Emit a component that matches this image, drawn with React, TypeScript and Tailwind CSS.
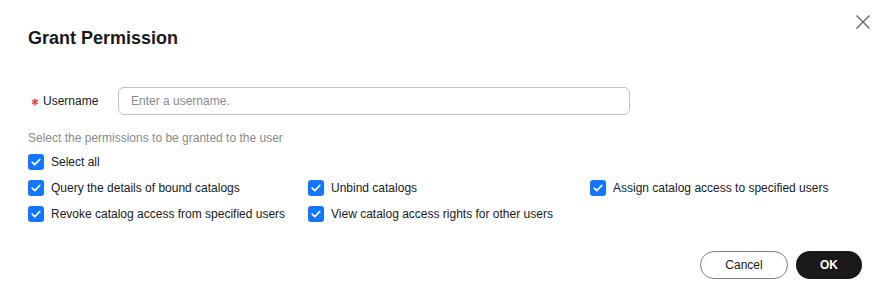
import React from "react";

const perms = [
  "Query the details of bound catalogs",
  "Unbind catalogs",
  "Assign catalog access to specified users",
  "Revoke catalog access from specified users",
  "View catalog access rights for other users",
];

function CheckBox({ label }: { label: string }) {
  return (
    <label className="flex items-center gap-[7px] h-[26px]">
      <span className="w-4 h-4 rounded-[3px] bg-[#1476ff] flex items-center justify-center">
        <svg width="10" height="8" viewBox="0 0 10 8" fill="none">
          <path d="M1.2 4.1L3.8 6.6L8.8 1.4" stroke="white" strokeWidth="1.6" strokeLinecap="round" strokeLinejoin="round" />
        </svg>
      </span>
      <span className="text-[12px] text-[#191919]">{label}</span>
    </label>
  );
}

export default function App() {
  return (
    <div className="w-[888px] h-[306px] bg-white relative font-['Liberation_Sans',Arial,sans-serif] pl-[28px] pr-[26px] pt-[27px]">
      <button className="absolute right-[17px] top-[14px] text-[#666]">
        <svg width="16" height="16" viewBox="0 0 16 16" fill="none">
          <path d="M1.5 1.5L14.5 14.5M14.5 1.5L1.5 14.5" stroke="currentColor" strokeWidth="1.4" />
        </svg>
      </button>
      <h1 className="text-[18px] leading-[22px] font-bold text-[#191919]">Grant Permission</h1>

      <div className="flex items-center mt-[38px]">
        <div className="w-[90px] flex items-center text-[12px] text-[#191919]">
          <svg width="8" height="8" viewBox="0 0 8 8" className="ml-[3px] mr-[4px] mt-[2px]">
            <path d="M4 0.5V7.5M1 2.2L7 5.8M7 2.2L1 5.8" stroke="#e54545" strokeWidth="1.5" />
          </svg>
          Username
        </div>
        <div className="w-[512px] h-[28px] border border-[#c2c2c2] rounded-[6px] flex items-center px-[12px] text-[12px] text-[#8a8a8a]">
          Enter a username.
        </div>
      </div>

      <p className="text-[12px] text-[#8a8a8a] mt-[15px] leading-[16px]">
        Select the permissions to be granted to the user
      </p>

      <div className="mt-[3px]">
        <CheckBox label="Select all" />
        <div className="grid grid-cols-[280px_282px_1fr]">
          {perms.map((p) => (
            <CheckBox key={p} label={p} />
          ))}
        </div>
      </div>

      <div className="flex justify-end gap-[8px] mt-[24px]">
        <button className="w-[88px] h-[28px] rounded-full border border-[#808080] text-[12px] text-[#191919]">
          Cancel
        </button>
        <button className="w-[66px] h-[28px] rounded-full bg-[#191919] text-[12px] font-bold text-white">
          OK
        </button>
      </div>
    </div>
  );
}
